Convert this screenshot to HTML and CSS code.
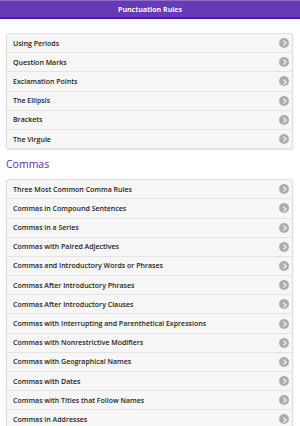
FILE: index.html
```html
<!DOCTYPE html>
<html lang="en">
<head>
    <meta charset="UTF-8">
    <title>Punctuation Rules</title>
    <link rel="stylesheet" href="styles.css">
</head>
<body>
    <div class="header">
        <h1>Punctuation Rules</h1>
    </div>
    <div class="content">
        <ul class="list">
            <li><a href="#">Using Periods<span class="arrow"></span></a></li>
            <li><a href="#">Question Marks<span class="arrow"></span></a></li>
            <li><a href="#">Exclamation Points<span class="arrow"></span></a></li>
            <li><a href="#">The Ellipsis<span class="arrow"></span></a></li>
            <li><a href="#">Brackets<span class="arrow"></span></a></li>
            <li><a href="#">The Virgule<span class="arrow"></span></a></li>
        </ul>
        <h2 class="section">Commas</h2>
        <ul class="list">
            <li><a href="#">Three Most Common Comma Rules<span class="arrow"></span></a></li>
            <li><a href="#">Commas in Compound Sentences<span class="arrow"></span></a></li>
            <li><a href="#">Commas in a Series<span class="arrow"></span></a></li>
            <li><a href="#">Commas with Paired Adjectives<span class="arrow"></span></a></li>
            <li><a href="#">Commas and Introductory Words or Phrases<span class="arrow"></span></a></li>
            <li><a href="#">Commas After Introductory Phrases<span class="arrow"></span></a></li>
            <li><a href="#">Commas After Introductory Clauses<span class="arrow"></span></a></li>
            <li><a href="#">Commas with Interrupting and Parenthetical Expressions<span class="arrow"></span></a></li>
            <li><a href="#">Commas with Nonrestrictive Modifiers<span class="arrow"></span></a></li>
            <li><a href="#">Commas with Geographical Names<span class="arrow"></span></a></li>
            <li><a href="#">Commas with Dates<span class="arrow"></span></a></li>
            <li><a href="#">Commas with Titles that Follow Names<span class="arrow"></span></a></li>
            <li><a href="#">Commas in Addresses<span class="arrow"></span></a></li>
        </ul>
    </div>
</body>
</html>
```
FILE: styles.css
```css
*{
    margin: 0;
    padding: 0;
    box-sizing: border-box;
}
body{
    background: #ffffff;
    font-family: "Open Sans", "DejaVu Sans", sans-serif;
    overflow: hidden;
}
.header{
    height: 19px;
    background: #673ab7;
    border-top: 1px solid #8a6fc4;
    border-bottom: 2px solid #5313b0;
    display: flex;
    align-items: center;
    justify-content: center;
}
.header h1{
    color: #ffffff;
    font-size: 7px;
    font-weight: 700;
    text-shadow: 0 0 1px rgba(0,0,0,0.3);
}
.content{
    padding: 14px 7px 0 6px;
}
.list{
    list-style: none;
    border: 1px solid #dddddd;
    border-radius: 3px;
    background: #f6f6f6;
    box-shadow: 0 1px 2px rgba(0,0,0,0.12);
}
.list li{
    border-top: 1px solid #e4e4e4;
}
.list li:first-child{
    border-top: none;
}
.list a{
    display: flex;
    align-items: center;
    justify-content: space-between;
    height: 18.2px;
    padding: 0 3px 0 6px;
    color: #222222;
    text-decoration: none;
    font-size: 7px;
    font-weight: 600;
}
.arrow{
    width: 10px;
    height: 10px;
    border-radius: 50%;
    background: #acacac;
    position: relative;
}
.arrow::after{
    content: "";
    position: absolute;
    left: 2.6px;
    top: 3.2px;
    width: 2.6px;
    height: 2.6px;
    border-top: 1.3px solid #ffffff;
    border-right: 1.3px solid #ffffff;
    transform: rotate(45deg);
}
.section{
    color: #5a2db3;
    font-size: 10.5px;
    font-weight: 400;
    margin: 8px 0 8px 0;
    line-height: 14px;
}
```
